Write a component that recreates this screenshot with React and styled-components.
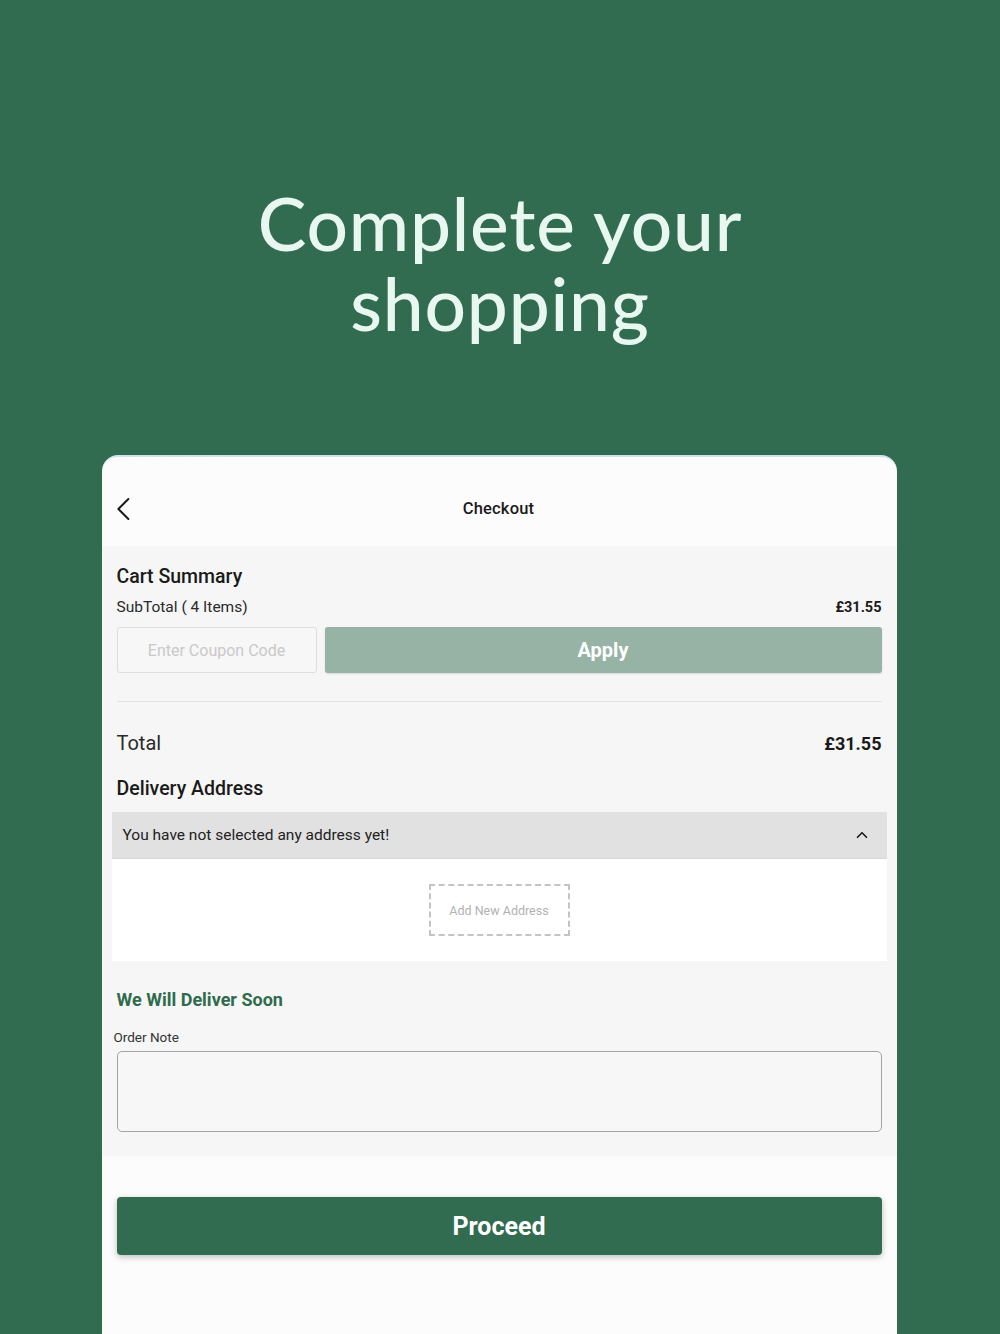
import React from 'react';
import styled, { createGlobalStyle } from 'styled-components';

const GlobalStyle = createGlobalStyle`
	html, body {
		margin: 0;
		padding: 0;
		background: #316b50;
	}
	* {
		box-sizing: border-box;
	}
`;

const Page = styled.div`
	width: 1000px;
	height: 1334px;
	overflow: hidden;
	background: #316b50;
	display: flex;
	flex-direction: column;
	align-items: center;
`;

const Headline = styled.h1`
	margin: 183px 0 0;
	font-family: Lato, 'Open Sans', sans-serif;
	font-weight: 500;
	font-size: 73px;
	line-height: 80px;
	color: #e9f7f1;
	text-align: center;
	letter-spacing: 0.8px;
`;

const Card = styled.div`
	margin-top: 112px;
	margin-right: 2px;
	width: 795px;
	flex: 1;
	background: #fcfcfc;
	border-radius: 16px 16px 0 0;
	border-top: 2px solid #cfe3ec;
	display: flex;
	flex-direction: column;
	font-family: Roboto, 'Liberation Sans', sans-serif;
	color: #1a1a1a;
`;

const StatusBar = styled.div`
	height: 20px;
	padding: 0 10px;
	display: flex;
	justify-content: space-between;
	align-items: center;
	font-size: 11px;
	font-weight: 600;
	color: rgba(255, 255, 255, 0.6);
`;

const NavBar = styled.div`
	height: 69px;
	padding: 0 8px 6px 7px;
	display: grid;
	grid-template-columns: 48px 1fr 48px;
	align-items: center;
`;

const Title = styled.div`
	text-align: center;
	font-size: 16.5px;
	font-weight: 500;
	letter-spacing: 0.2px;
`;

const Body = styled.div`
	background: #f6f6f6;
	padding: 19px 15px 24px;
	display: flex;
	flex-direction: column;
`;

const SectionTitle = styled.div`
	font-size: ${(p) => p.$size || 19.5}px;
	font-weight: ${(p) => p.$weight || 500};
	color: ${(p) => p.$color || '#1a1a1a'};
	margin: ${(p) => p.$margin || '0'};
`;

const Row = styled.div`
	display: flex;
	justify-content: space-between;
	align-items: center;
	margin: ${(p) => p.$margin || '0'};
`;

const Label = styled.span`
	font-size: ${(p) => p.$size || 15.5}px;
	font-weight: 400;
	color: #2a2a2a;
`;

const Price = styled.span`
	font-size: ${(p) => p.$size || 14.5}px;
	font-weight: 700;
	color: #1a1a1a;
`;

const CouponRow = styled.div`
	margin-top: 11px;
	display: flex;
	gap: 8px;
	height: 46px;
`;

const CouponInput = styled.div`
	width: 200px;
	border: 1px solid #dcdce2;
	border-radius: 3px;
	background: #f7f7f7;
	display: flex;
	align-items: center;
	justify-content: center;
	font-size: 16px;
	color: #c9c9c9;
`;

const ApplyButton = styled.button`
	flex: 1;
	border: none;
	border-radius: 3px;
	background: #97b3a5;
	color: #ffffff;
	font-family: inherit;
	font-size: 20px;
	font-weight: 700;
	box-shadow: 0 1px 2px rgba(0, 0, 0, 0.12);
`;

const Divider = styled.div`
	height: 1px;
	background: #e0e0e0;
	margin-top: 28px;
`;

const AddressBox = styled.div`
	margin: 12px -5px 0;
	display: flex;
	flex-direction: column;
`;

const AddressHeader = styled.div`
	height: 47px;
	background: #e1e1e1;
	border-bottom: 1px solid #d6d6d6;
	padding: 0 16px 0 11px;
	display: flex;
	align-items: center;
	justify-content: space-between;
	font-size: 15.5px;
	color: #222;
`;

const AddressBody = styled.div`
	height: 102px;
	background: #ffffff;
	display: flex;
	align-items: center;
	justify-content: center;
`;

const AddNewButton = styled.div`
	width: 141px;
	height: 52px;
	border: 2px dashed #c4c4c4;
	display: flex;
	align-items: center;
	justify-content: center;
	font-size: 12.5px;
	color: #b2b2b2;
`;

const NoteLabel = styled.div`
	margin: 19px 0 0 -3px;
	font-size: 13.5px;
	color: #333;
`;

const NoteArea = styled.div`
	margin-top: 6px;
	height: 81px;
	border: 1px solid #a3a3a3;
	border-radius: 5px;
	background: #f7f7f7;
`;

const Footer = styled.div`
	padding: 41px 15px 0;
`;

const ProceedButton = styled.button`
	width: 100%;
	height: 58px;
	border: none;
	border-radius: 4px;
	background: #316b50;
	color: #ffffff;
	font-family: inherit;
	font-size: 25px;
	font-weight: 700;
	box-shadow: 0 2px 6px rgba(0, 0, 0, 0.25);
`;

const Chevron = ({ d, size = 22, w = 2 }) => (
	<svg width={size} height={size} viewBox='0 0 24 24' fill='none' stroke='#1a1a1a' strokeWidth={w} strokeLinecap='round' strokeLinejoin='round'>
		<path d={d} />
	</svg>
);

const App = () => {
	return (
		<Page>
			<GlobalStyle />
			<Headline>
				Complete your
				<br />
				shopping
			</Headline>
			<Card>
				<StatusBar>
					<span>2:31 PM &nbsp; Wed Nov 11</span>
					<span>100%</span>
				</StatusBar>
				<NavBar>
					<Chevron d='M15.5 4 L7.5 12 L15.5 20' size={30} w={1.6} />
					<Title>Checkout</Title>
					<span />
				</NavBar>
				<Body>
					<SectionTitle>Cart Summary</SectionTitle>
					<Row $margin='10px 0 0'>
						<Label>SubTotal ( 4 Items)</Label>
						<Price>£31.55</Price>
					</Row>
					<CouponRow>
						<CouponInput>Enter Coupon Code</CouponInput>
						<ApplyButton>Apply</ApplyButton>
					</CouponRow>
					<Divider />
					<Row $margin='29px 0 0'>
						<Label $size={20}>Total</Label>
						<Price $size={18}>£31.55</Price>
					</Row>
					<SectionTitle $margin='22px 0 0'>Delivery Address</SectionTitle>
					<AddressBox>
						<AddressHeader>
							<span>You have not selected any address yet!</span>
							<Chevron d='M6 15 L12 9 L18 15' size={18} w={2.2} />
						</AddressHeader>
						<AddressBody>
							<AddNewButton>Add New Address</AddNewButton>
						</AddressBody>
					</AddressBox>
					<SectionTitle $color='#2f6b4c' $weight={700} $size={18} $margin='28px 0 0'>
						We Will Deliver Soon
					</SectionTitle>
					<NoteLabel>Order Note</NoteLabel>
					<NoteArea />
				</Body>
				<Footer>
					<ProceedButton>Proceed</ProceedButton>
				</Footer>
			</Card>
		</Page>
	);
};

export default App;
